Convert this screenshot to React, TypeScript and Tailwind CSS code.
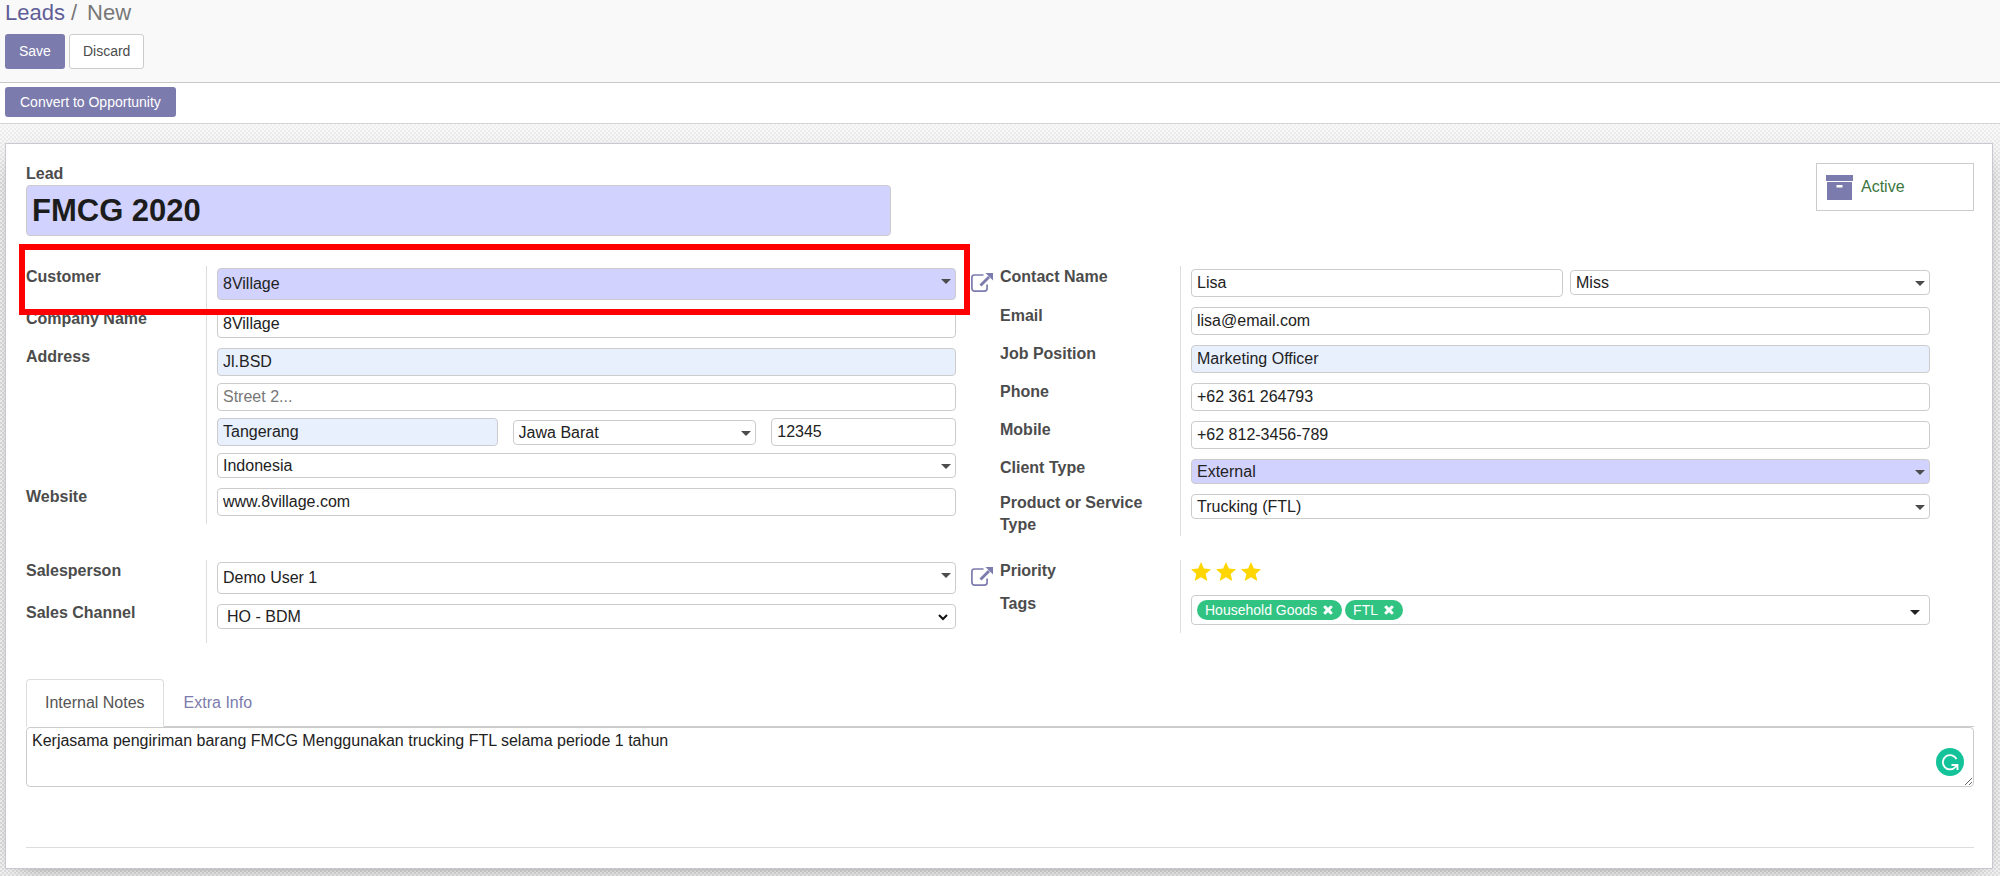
import React, { useState } from "react";
import { FaTimes } from "react-icons/fa";

const FIELD = "w-full h-7 border border-[#ccc] rounded-[4px] px-[5px] text-[#222] focus:outline-none";

interface RowProps {
  label: string;
  id: string;
  children: React.ReactNode;
  extra?: React.ReactNode;
}

const Row: React.FC<RowProps> = ({ label, id, children, extra }) => (
  <div className="grid grid-cols-[181px_1fr_44px]">
    <label
      htmlFor={id}
      className="border-r border-[#ddd] pr-8 font-bold leading-[22px] text-[#4c4c4c]"
    >
      {label}
    </label>
    <div className="min-w-0 pl-[10px] pt-[2px] pb-2">{children}</div>
    <div className="pl-[15px] pt-[7px]">{extra}</div>
  </div>
);

interface FieldProps {
  id?: string;
  value: string;
  label?: string;
  className?: string;
  placeholder?: string;
}

const TextField: React.FC<FieldProps> = ({ id, value, label, className = "bg-white", placeholder }) => (
  <input
    id={id}
    type="text"
    aria-label={label}
    defaultValue={value}
    placeholder={placeholder}
    spellCheck={false}
    className={`${FIELD} block placeholder:text-[#777] ${className}`}
  />
);

const Dropdown: React.FC<FieldProps> = ({ id, value, label, className = "h-[25px] bg-white" }) => (
  <div className="relative">
    <select
      id={id}
      aria-label={label}
      className={`w-full block appearance-none border border-[#ccc] rounded-[4px] px-[5px] text-[#222] focus:outline-none ${className}`}
    >
      <option>{value}</option>
    </select>
    <svg
      viewBox="0 0 10 5"
      className="w-[10px] h-[5px] absolute right-[5px] top-[11px] fill-[#4c4c4c] pointer-events-none"
    >
      <path d="M0 0h10L5 5z" />
    </svg>
  </div>
);

const OpenRecord: React.FC<{ label: string }> = ({ label }) => (
  <button type="button" aria-label={label} className="block text-[#7c7bad]">
    <svg viewBox="0 0 22 19" className="w-[22px] h-[19px]" fill="none" stroke="currentColor">
      <path
        d="M12.500 2H3.500A2.600 2.600 0 0 0 0.900 4.600V15.500a2.600 2.600 0 0 0 2.600 2.600H13.500a2.600 2.600 0 0 0 2.600-2.600V11.500"
        strokeWidth="1.700"
      />
      <path d="M9.500 12.500L18 4" strokeWidth="2.800" />
      <path d="M14.500 0H22V7.500z" fill="currentColor" stroke="none" />
    </svg>
  </button>
);

const Tag: React.FC<{ name: string }> = ({ name }) => (
  <span className="h-5 px-2 flex items-center gap-[5px] rounded-full bg-[#30c381] text-white text-[14px]">
    {name}
    <button type="button" aria-label={`Remove ${name}`}>
      <FaTimes className="w-3 h-3" strokeWidth={40} stroke="currentColor" />
    </button>
  </span>
);

const tabs = ["Internal Notes", "Extra Info"];

const App: React.FC = () => {
  const [tab, setTab] = useState<string>(tabs[0]);
  const [note, setNote] = useState<string>(
    "Kerjasama pengiriman barang FMCG Menggunakan trucking FTL selama periode 1 tahun"
  );

  return (
    <div className="min-h-screen flex flex-col font-['Liberation_Sans',Arial,sans-serif] text-[16px] text-[#4c4c4c] bg-white">
      <header className="bg-[#f9f9f9] border-b border-[#c8c8c8] px-[5px] pb-[13px]">
        <nav className="flex gap-[6px] text-[22px] leading-[26px] pb-2 text-[#777]">
          <a href="#leads" className="text-[#5f5e97]">
            Leads
          </a>
          <span>/</span>
          <span className="pl-1">New</span>
        </nav>
        <div className="flex gap-1 text-[14px]">
          <button type="button" className="h-[35px] px-[14px] rounded-[3px] bg-[#7c7bad] text-white">
            Save
          </button>
          <button
            type="button"
            className="h-[35px] px-[13px] rounded-[3px] border border-[#ccc] bg-white text-[#4c4c4c]"
          >
            Discard
          </button>
        </div>
      </header>

      <div className="px-[5px] pt-1 pb-[6px] border-b border-[#d4d4d4]">
        <button type="button" className="block h-[30px] px-[15px] rounded-[3px] bg-[#7c7bad] text-white text-[14px]">
          Convert to Opportunity
        </button>
      </div>

      <main className="flex-1 pl-[5px] pr-[7px] pt-[19px] pb-2 bg-[linear-gradient(#ffffff90,#ffffff00_60px),repeating-conic-gradient(#dcdcdc_0_25%,#f1f1f1_0_50%)] bg-size-[100%_100%,4px_4px]">
        <form
          className="bg-white border border-[#c8c8d3] shadow-[0_5px_20px_-15px_#000] pl-5 pr-[18px] pb-5"
          onSubmit={(e) => e.preventDefault()}
        >
          <div className="flex justify-between items-start pt-[19px]">
            <div className="w-[44.4%]">
              <label htmlFor="lead" className="block font-bold leading-[22px]">
                Lead
              </label>
              <input
                id="lead"
                type="text"
                defaultValue="FMCG 2020"
                className="w-full h-[51px] block border border-[#ccc] rounded-[4px] bg-[#d2d2ff] px-[5px] text-[31px] font-bold text-[#1c1c1c] focus:outline-none"
              />
            </div>
            <button
              type="button"
              className="w-[158px] h-12 border border-[#ccc] flex items-center gap-2 pl-[9px] text-[#3c763d]"
            >
              <svg viewBox="0 0 27 25" className="w-[27px] h-[25px] fill-[#7c7bad]">
                <path d="M0 0h27v6H0z" />
                <path fillRule="evenodd" d="M1 7h25v18H1zM10.500 10v2.500h6V10z" />
              </svg>
              Active
            </button>
          </div>

          <div className="grid grid-cols-2 items-start pt-[30px]">
            <div className="relative">
              <Row label="Customer" id="customer" extra={<OpenRecord label="Open customer" />}>
                <Dropdown id="customer" value="8Village" className="h-8 bg-[#d2d2ff]" />
              </Row>
              <Row label="Company Name" id="company">
                <TextField id="company" value="8Village" />
              </Row>
              <Row label="Address" id="street">
                <div className="flex flex-col gap-[7px]">
                  <TextField id="street" value="Jl.BSD" className="bg-[#e8f0fe]" />
                  <TextField label="Street 2" value="" placeholder="Street 2..." />
                  <div className="flex items-center justify-between">
                    <div className="w-[38%]">
                      <TextField label="City" value="Tangerang" className="bg-[#e8f0fe]" />
                    </div>
                    <div className="w-[33%]">
                      <Dropdown label="State" value="Jawa Barat" />
                    </div>
                    <div className="w-[25%]">
                      <TextField label="ZIP" value="12345" />
                    </div>
                  </div>
                  <Dropdown label="Country" value="Indonesia" />
                </div>
              </Row>
              <Row label="Website" id="website">
                <TextField id="website" value="www.8village.com" />
              </Row>
              {/* customer highlight */}
              <div className="absolute -top-[22px] -left-[7px] right-[30px] h-[71px] border-[6px] border-[#f00] pointer-events-none" />
            </div>

            <div>
              <Row label="Contact Name" id="contact">
                <div className="flex items-center gap-[7px] min-h-[29px]">
                  <div className="grow-[31] basis-0">
                    <TextField id="contact" value="Lisa" />
                  </div>
                  <div className="grow-[30] basis-0">
                    <Dropdown label="Title" value="Miss" />
                  </div>
                </div>
              </Row>
              <Row label="Email" id="email">
                <TextField id="email" value="lisa@email.com" />
              </Row>
              <Row label="Job Position" id="job">
                <TextField id="job" value="Marketing Officer" className="bg-[#e8f0fe]" />
              </Row>
              <Row label="Phone" id="phone">
                <TextField id="phone" value="+62 361 264793" />
              </Row>
              <Row label="Mobile" id="mobile">
                <TextField id="mobile" value="+62 812-3456-789" />
              </Row>
              <Row label="Client Type" id="client">
                <Dropdown id="client" value="External" className="h-[25px] bg-[#d2d2ff]" />
              </Row>
              <Row label="Product or Service Type" id="product">
                <Dropdown id="product" value="Trucking (FTL)" />
              </Row>
            </div>
          </div>

          <div className="grid grid-cols-2 items-start pt-6">
            <div>
              <Row label="Salesperson" id="salesperson" extra={<OpenRecord label="Open salesperson" />}>
                <Dropdown id="salesperson" value="Demo User 1" className="h-8 bg-white" />
              </Row>
              <Row label="Sales Channel" id="channel">
                <div className="relative pb-[6px]">
                  <select
                    id="channel"
                    className="w-full h-[25px] block appearance-none border border-[#ccc] rounded-[4px] bg-white px-[9px] text-[#222] focus:outline-none"
                  >
                    <option>HO - BDM</option>
                  </select>
                  <svg
                    viewBox="0 0 10 7"
                    className="w-[10px] h-[7px] absolute right-2 top-[10px] pointer-events-none"
                    fill="none"
                    stroke="#111"
                    strokeWidth="2"
                  >
                    <path d="M1 1l4 4 4-4" />
                  </svg>
                </div>
              </Row>
            </div>
            <div>
              <Row label="Priority" id="priority">
                <div id="priority" className="h-[23px] flex gap-[5px]">
                  {[1, 2, 3].map((n) => (
                    <button key={n} type="button" aria-label={`Priority ${n}`} className="h-[19px]">
                      <svg viewBox="0 0 20 19" className="w-5 h-[19px] fill-[#ffd600]">
                        <path d="M10 0l2.900 6.500 7.100.7-5.300 4.700 1.600 7.100L10 15.300 3.700 19l1.600-7.100L0 7.200l7.100-.7z" />
                      </svg>
                    </button>
                  ))}
                </div>
              </Row>
              <Row label="Tags" id="tags">
                <div className="h-[30px] flex items-center gap-[3px] border border-[#ccc] rounded-[4px] px-[5px]">
                  <Tag name="Household Goods" />
                  <Tag name="FTL" />
                  <input id="tags" type="text" className="flex-1 min-w-0 focus:outline-none" />
                  <svg viewBox="0 0 10 5" className="w-[10px] h-[5px] mr-1 mt-1 fill-[#222]">
                    <path d="M0 0h10L5 5z" />
                  </svg>
                </div>
              </Row>
            </div>
          </div>

          <div className="pt-9">
            <div className="flex border-b border-[#ccc]" role="tablist">
              {tabs.map((name) => (
                <button
                  key={name}
                  type="button"
                  role="tab"
                  aria-selected={tab === name}
                  onClick={() => setTab(name)}
                  className={
                    tab === name
                      ? "h-12 -mb-px px-[18px] border border-[#ddd] border-b-white rounded-t-[4px] bg-white text-[#555]"
                      : "h-12 -mb-px px-5 text-[#7c7bad]"
                  }
                >
                  {name}
                </button>
              ))}
            </div>
            <div className="relative">
              <textarea
                aria-label="Internal Notes"
                spellCheck={false}
                value={note}
                onChange={(e) => setNote(e.target.value)}
                className="w-full h-[60px] block border border-[#ccc] rounded-[4px] px-[5px] pt-1 leading-[18px] text-[#222] focus:outline-none"
              />
              <svg viewBox="0 0 28 28" className="w-7 h-7 absolute right-[10px] top-[21px]" fill="none">
                <circle cx="14" cy="14" r="14" fill="#15c39a" />
                <path d="M20.500 11A7.200 7.200 0 1 0 19.500 19L21 17.500" stroke="#fff" strokeWidth="1.800" />
                <path d="M15.500 17h6v5" stroke="#fff" strokeWidth="1.800" />
              </svg>
            </div>
          </div>

          <hr className="mt-[60px] border-[#ddd]" />
        </form>
      </main>
    </div>
  );
};

export default App;
